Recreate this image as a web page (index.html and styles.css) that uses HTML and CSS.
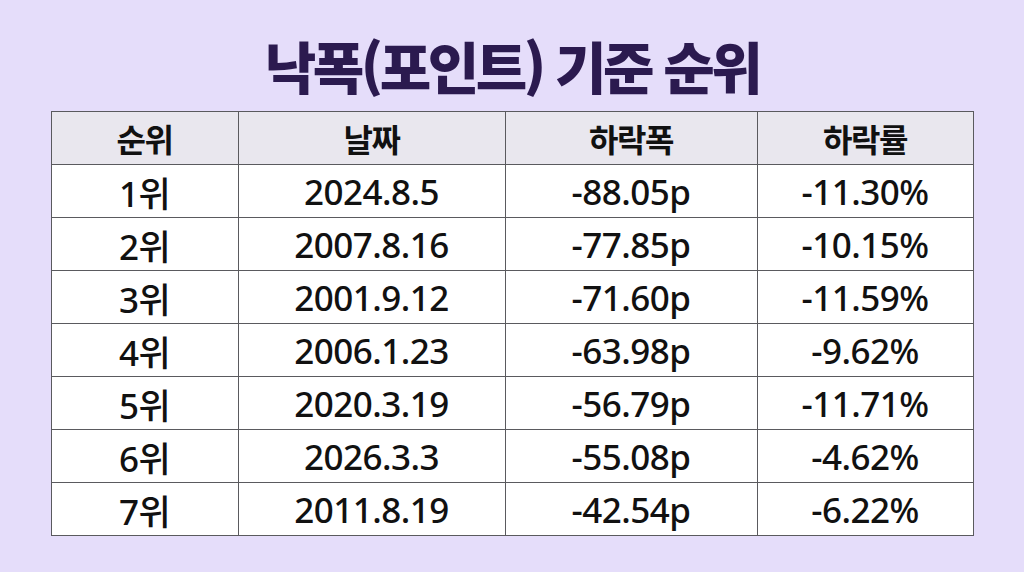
FILE: index.html
```html
<!DOCTYPE html>
<html lang="ko">
<head>
<meta charset="utf-8">
<link rel="stylesheet" href="styles.css">
</head>
<body>
<main class="page">
  <h1 class="title">낙폭(포인트) 기준 순위</h1>
  <table class="rank">
    <colgroup>
      <col class="c1"><col class="c2"><col class="c3"><col class="c4">
    </colgroup>
    <thead>
      <tr><th>순위</th><th>날짜</th><th>하락폭</th><th>하락률</th></tr>
    </thead>
    <tbody>
      <tr><td>1위</td><td>2024.8.5</td><td>-88.05p</td><td>-11.30%</td></tr>
      <tr><td>2위</td><td>2007.8.16</td><td>-77.85p</td><td>-10.15%</td></tr>
      <tr><td>3위</td><td>2001.9.12</td><td>-71.60p</td><td>-11.59%</td></tr>
      <tr><td>4위</td><td>2006.1.23</td><td>-63.98p</td><td>-9.62%</td></tr>
      <tr><td>5위</td><td>2020.3.19</td><td>-56.79p</td><td>-11.71%</td></tr>
      <tr><td>6위</td><td>2026.3.3</td><td>-55.08p</td><td>-4.62%</td></tr>
      <tr><td>7위</td><td>2011.8.19</td><td>-42.54p</td><td>-6.22%</td></tr>
    </tbody>
  </table>
</main>
</body>
</html>
```
FILE: styles.css
```css
html, body {
  margin: 0;
  padding: 0;
}
body {
  width: 1024px;
  height: 572px;
  overflow: hidden;
  background: #e5ddfa;
  font-family: "Noto Sans", "Noto Sans CJK KR", sans-serif;
}
.page {
  display: flex;
  flex-direction: column;
  align-items: center;
  padding-top: 30px;
}
.title {
  margin: 0 0 12px 0;
  height: 69px;
  line-height: 69px;
  font-family: "Noto Sans CJK KR", sans-serif;
  font-weight: 900;
  font-size: 56px;
  letter-spacing: -3.5px;
  color: #2b1a4f;
}
.rank {
  width: 922px;
  border-collapse: collapse;
  table-layout: fixed;
  background: #ffffff;
  color: #111111;
}
.c1 { width: 187px; }
.c2 { width: 267px; }
.c3 { width: 252px; }
.c4 { width: 216px; }
.rank th, .rank td {
  border: 1.5px solid #5a5a5e;
  text-align: center;
  padding: 0;
  height: 52px;
}
.rank th {
  background: #e9e7ee;
  font-family: "Noto Sans CJK KR", sans-serif;
  font-weight: 700;
  font-size: 32px;
  letter-spacing: -1.5px;
}
.rank td {
  font-family: "Noto Sans", "Noto Sans CJK KR", sans-serif;
  font-weight: 500;
  font-size: 35px;
  letter-spacing: -0.5px;
}
```
